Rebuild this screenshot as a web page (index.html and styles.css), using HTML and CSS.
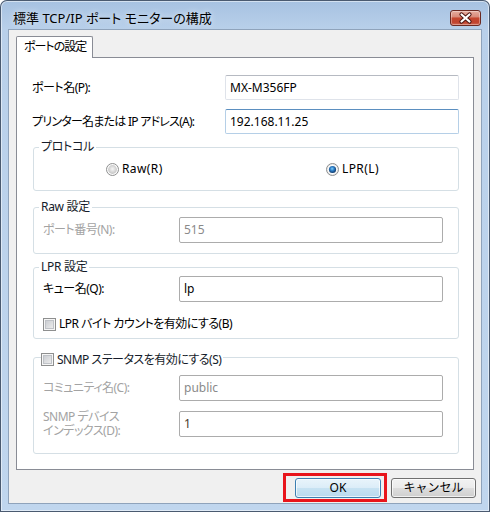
FILE: index.html
```html
<!DOCTYPE html>
<html lang="ja">
<head>
<meta charset="utf-8">
<title>標準 TCP/IP ポート モニターの構成</title>
<link rel="stylesheet" href="styles.css">
</head>
<body>
<div class="window">
  <div class="titlebar">
    <span class="title">標準 TCP/IP ポート モニターの構成</span>
    <button class="close" type="button" aria-label="閉じる">
      <svg width="31" height="16" viewBox="0 0 31 16"><path d="M11.5 4.5 L19.5 11.5 M19.5 4.5 L11.5 11.5" stroke="#4a1410" stroke-width="4.2" stroke-linecap="round" fill="none"/><path d="M11.5 4.5 L19.5 11.5 M19.5 4.5 L11.5 11.5" stroke="#ffffff" stroke-width="2.2" stroke-linecap="round" fill="none"/></svg>
    </button>
  </div>
  <div class="client">
    <div class="tab">ポートの設定</div>
    <div class="panel">
      <div class="row first">
        <span class="label">ポート名(P):</span>
        <div class="input">MX-M356FP</div>
      </div>
      <div class="row">
        <span class="label tight">プリンター名または IP アドレス(A):</span>
        <div class="input focus">192.168.11.25</div>
      </div>

      <fieldset class="group proto">
        <legend>プロトコル</legend>
        <div class="radios">
          <span class="radio">
            <svg width="13" height="13" viewBox="0 0 13 13"><defs><radialGradient id="ru" cx="50%" cy="45%" r="55%"><stop offset="0" stop-color="#f6f6f6"/><stop offset="1" stop-color="#c4c4c4"/></radialGradient></defs><circle cx="6.5" cy="6.5" r="6" fill="#fbfbfb" stroke="#8e8f8f"/><circle cx="6.5" cy="6.5" r="4.4" fill="url(#ru)"/></svg>
            Raw(R)
          </span>
          <span class="radio">
            <svg width="13" height="13" viewBox="0 0 13 13"><defs><radialGradient id="rc" cx="45%" cy="40%" r="60%"><stop offset="0" stop-color="#7fd0fa"/><stop offset="0.45" stop-color="#2f7fc8"/><stop offset="1" stop-color="#0b3566"/></radialGradient></defs><circle cx="6.5" cy="6.5" r="6" fill="#eaeaea" stroke="#8e8f8f"/><circle cx="6.5" cy="6.5" r="4.6" fill="#fdfdfd"/><circle cx="6.5" cy="6.5" r="3.6" fill="url(#rc)"/></svg>
            LPR(L)
          </span>
        </div>
      </fieldset>

      <fieldset class="group raw">
        <legend>Raw 設定</legend>
        <div class="grow">
          <span class="label dim">ポート番号(N):</span>
          <div class="ginput dimtext">515</div>
        </div>
      </fieldset>

      <fieldset class="group lpr">
        <legend>LPR 設定</legend>
        <div class="grow">
          <span class="label">キュー名(Q):</span>
          <div class="ginput">lp</div>
        </div>
        <div class="check">
          <svg width="13" height="13" viewBox="0 0 13 13"><defs><linearGradient id="cb1" x1="0" y1="0" x2="1" y2="1"><stop offset="0" stop-color="#c9ccd1"/><stop offset="1" stop-color="#ededed"/></linearGradient></defs><rect x="0.5" y="0.5" width="12" height="12" fill="#f6f6f6" stroke="#8e8f8f"/><rect x="2.5" y="2.5" width="8" height="8" fill="url(#cb1)" stroke="#bfc2c7" stroke-width="1"/></svg>
          <span class="jp">LPR バイト カウントを有効にする(B)</span>
        </div>
      </fieldset>

      <fieldset class="group snmp">
        <legend><span class="legcheck">
          <svg width="13" height="13" viewBox="0 0 13 13"><defs><linearGradient id="cb2" x1="0" y1="0" x2="1" y2="1"><stop offset="0" stop-color="#c9ccd1"/><stop offset="1" stop-color="#ededed"/></linearGradient></defs><rect x="0.5" y="0.5" width="12" height="12" fill="#f6f6f6" stroke="#8e8f8f"/><rect x="2.5" y="2.5" width="8" height="8" fill="url(#cb2)" stroke="#bfc2c7" stroke-width="1"/></svg>
          <span class="jp">SNMP ステータスを有効にする(S)</span>
        </span></legend>
        <div class="grow s1">
          <span class="label dim">コミュニティ名(C):</span>
          <div class="ginput dimtext">public</div>
        </div>
        <div class="grow s2">
          <span class="label dim two">SNMP デバイス<br>インデックス(D):</span>
          <div class="ginput darktext">1</div>
        </div>
      </fieldset>
    </div>
    <div class="footer">
      <span class="highlight"><button class="btn default" type="button">OK</button></span>
      <button class="btn cancel" type="button">キャンセル</button>
    </div>
  </div>
</div>
</body>
</html>
```
FILE: styles.css
```css
* { box-sizing: border-box; }
html, body { margin: 0; padding: 0; background: #ffffff; }
body {
  font-family: "Noto Sans", "Noto Sans CJK JP", sans-serif;
  font-size: 12px;
  line-height: 14px;
  color: #000;
  font-feature-settings: "palt";
}

.window {
  width: 490px;
  height: 512px;
  display: flex;
  flex-direction: column;
  background: linear-gradient(to bottom, #a6c1e1 0px, #b9d0ea 30px, #c0d6ee 100%);
  border-radius: 7px 7px 0 0;
  box-shadow: inset 0 0 0 1px #4a5a70, inset 0 0 0 2px rgba(255,255,255,0.5);
}

.titlebar {
  height: 30px;
  flex: none;
  display: flex;
  align-items: flex-start;
  padding: 10px 9px 0 13px;
}
.title {
  flex: 1;
  font-size: 13px;
  line-height: 16px;
  color: #000;
  text-shadow: 0 0 6px rgba(255,255,255,0.8);
}
.close {
  width: 31px;
  height: 16px;
  padding: 0;
  margin: 0;
  border: 1px solid #6b2a22;
  border-radius: 3px;
  background: linear-gradient(to bottom, #e6ad9f 0%, #d98b7a 42%, #c5472f 50%, #c0432e 80%, #d06650 100%);
  box-shadow: inset 0 0 0 1px rgba(255,255,255,0.35);
  display: flex;
  align-items: center;
  justify-content: center;
}
.close svg { display: block; margin: -1px; }

.client {
  flex: 1;
  margin: 0 9px 9px 9px;
  background: #f0f0f0;
  padding: 6px 0 0 7px;
  box-shadow: 0 0 0 1px #8fa3bb;
  display: flex;
  flex-direction: column;
}

.tab {
  width: 77px;
  height: 22px;
  border: 1px solid #898c95;
  border-bottom: none;
  border-radius: 2px 2px 0 0;
  background: #ffffff;
  margin-bottom: -1px;
  position: relative;
  z-index: 1;
  padding-left: 7px;
  line-height: 20px;
  white-space: nowrap;
  letter-spacing: -1px;
}

.panel {
  width: 458px;
  height: 413px;
  border: 1px solid #898c95;
  background: #ffffff;
}

.row {
  display: grid;
  grid-template-columns: 193px 234px;
  padding-left: 15px;
  align-items: center;
  margin-top: 9px;
}
.row.first { margin-top: 17px; }
.label { white-space: nowrap; letter-spacing: -0.5px; }
.label.tight { letter-spacing: -0.75px; }
.jp { letter-spacing: -0.5px; }

.input {
  height: 25px;
  border: 1px solid #dfe3ea;
  border-top-color: #b6bac2;
  border-radius: 2px;
  padding-left: 4px;
  line-height: 23px;
  background: #fff;
}
.input.focus {
  border-color: #b5cfe7;
  border-top-color: #5b8fc0;
}

.group {
  margin: 6px 0 0 16px;
  width: 426px;
  min-width: 0;
  padding: 0;
  border: 1px solid #d5dfe5;
  border-radius: 3px;
}
.group legend {
  padding: 0 2px;
  margin-left: 5px;
  line-height: 14px;
  color: #151c2a;
  letter-spacing: -0.3px;
}

.radios {
  display: grid;
  grid-template-columns: 220px auto;
  padding-left: 72px;
  margin: 7px 0 13px;
  height: 16px;
  align-items: center;
}
.radio {
  display: flex;
  align-items: center;
  gap: 3px;
  white-space: nowrap;
  letter-spacing: 0.4px;
}
.radio svg, .check svg, .legcheck svg { display: block; flex: none; }

.raw { margin-top: 9px; }
.grow {
  display: grid;
  grid-template-columns: 136px 264px;
  padding-left: 9px;
  align-items: center;
  margin: 3px 0 10px;
}
.ginput {
  height: 26px;
  border: 1px solid #acacac;
  border-radius: 2px;
  padding-left: 4px;
  line-height: 24px;
  background: #fff;
}
.dim { color: #a3a3a3; }
.dimtext { color: #8a8a8a; }
.darktext { color: #4a3a2a; }

.lpr { margin-top: 6px; }
.lpr .grow { margin: 2px 0 0; }
.check {
  display: flex;
  align-items: center;
  gap: 3px;
  height: 16px;
  padding-left: 9px;
  margin: 14px 0 6px;
  white-space: nowrap;
}

.snmp { margin-top: 10px; }
.snmp legend {
  margin-left: 7px;
  padding: 4px 2px 0 0;
  letter-spacing: 0;
}
.legcheck {
  display: flex;
  align-items: center;
  gap: 3px;
  height: 13px;
  white-space: nowrap;
}
.snmp .s1 { margin: 9px 0 0; }
.snmp .s2 { margin: 10px 0 15px; align-items: start; }
.two { line-height: 14px; margin-top: -1px; }

.footer {
  width: 460px;
  display: flex;
  justify-content: flex-end;
  align-items: flex-start;
  gap: 4px;
  margin-top: 3px;
}
.highlight {
  display: block;
  border: 3px solid #e8141b;
  padding: 2px 3px 1px 9px;
}
.btn {
  display: block;
  height: 20px;
  margin: 0;
  padding: 0;
  font-family: inherit;
  font-size: 12px;
  line-height: 18px;
  color: #000;
  border-radius: 3px;
}
.btn.default {
  width: 86px;
  border: 1px solid #3c7fb1;
  background: linear-gradient(to bottom, #e9f4fb 0%, #dcedf8 48%, #c7e2f2 52%, #b9daee 100%);
  box-shadow: inset 0 0 0 1px rgba(255,255,255,0.7);
}
.btn.cancel {
  width: 85px;
  margin-top: 5px;
  border: 1px solid #707070;
  background: linear-gradient(to bottom, #f2f2f2 0%, #ebebeb 48%, #dddddd 52%, #cfcfcf 100%);
  box-shadow: inset 0 0 0 1px rgba(255,255,255,0.7);
}
```
